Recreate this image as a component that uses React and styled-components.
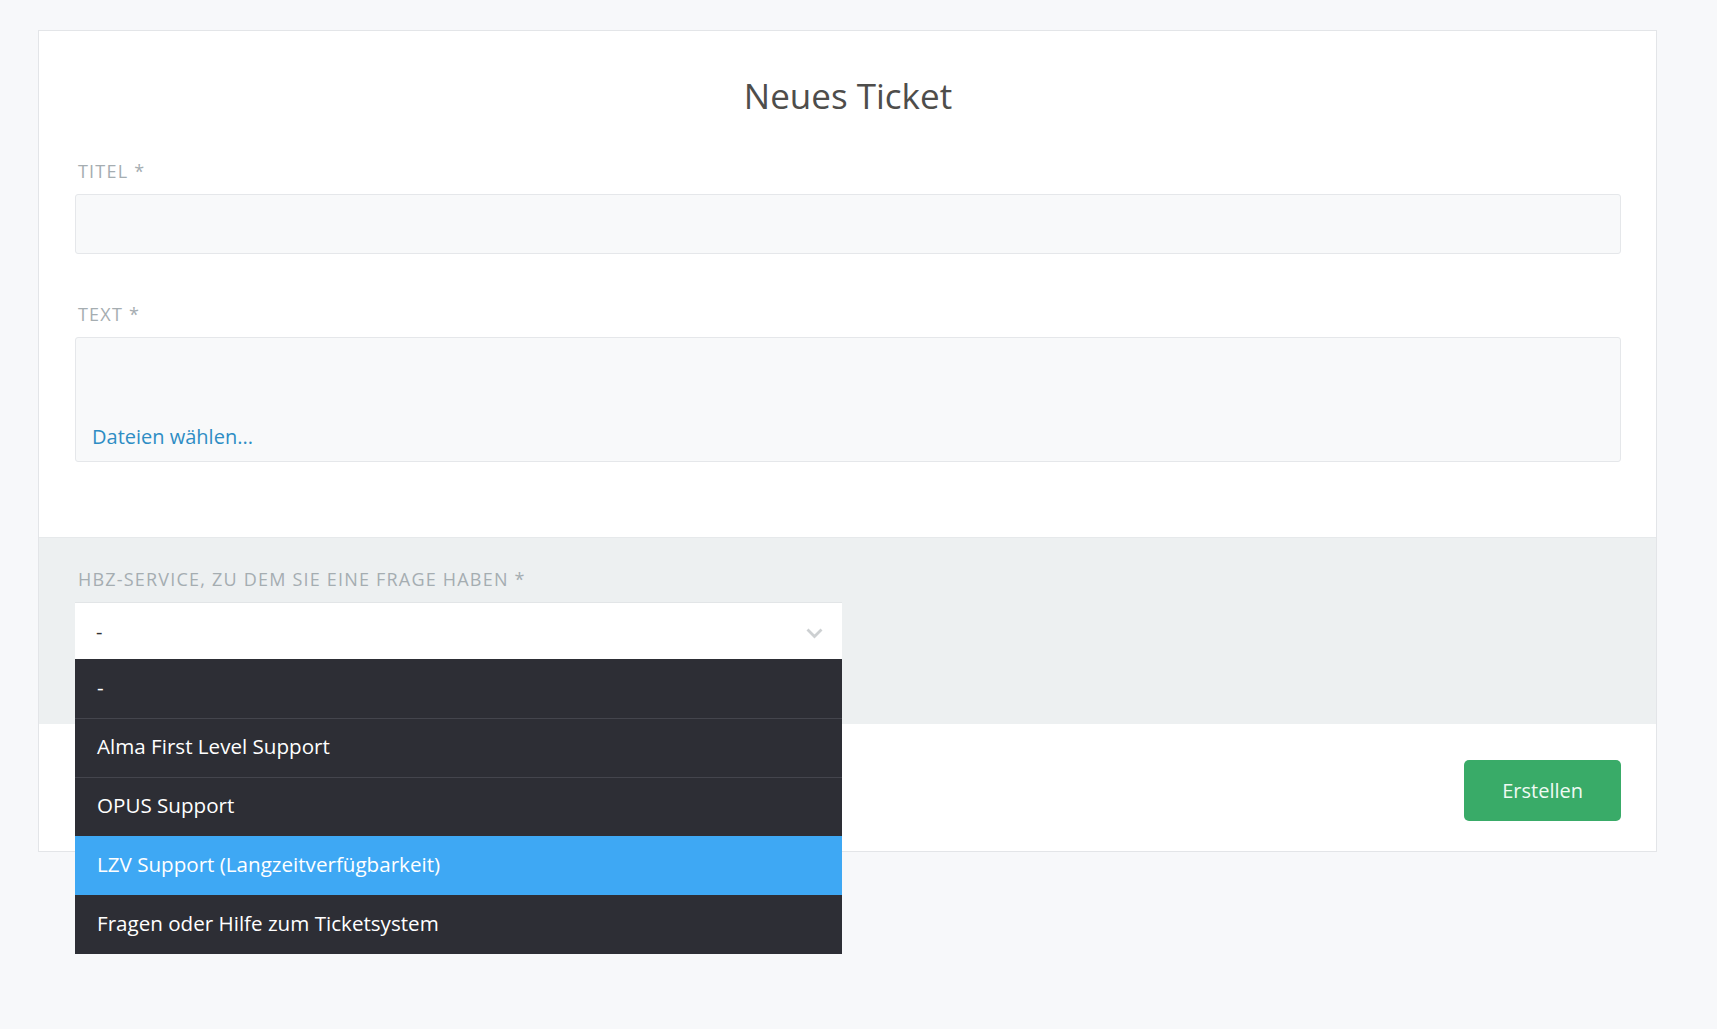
import React from 'react';
import styled, { createGlobalStyle } from 'styled-components';

const GlobalStyle = createGlobalStyle`
  html, body {
    margin: 0;
    padding: 0;
    background: #f7f8fa;
  }
  body {
    font-family: "Open Sans", "Noto Sans", sans-serif;
    color: #4f4f4f;
  }
  * {
    box-sizing: border-box;
  }
`

const Page = styled.div`
  min-height: 1029px;
  padding: 30px 60px 0 38px;
`

const Card = styled.div`
  background: #ffffff;
  border: 1px solid #e3e5e8;
`

const Main = styled.div`
  padding: 44px 35px 75px 36px;
`

const Title = styled.h1`
  margin: 0 0 42px;
  font-size: 35px;
  line-height: 42px;
  font-weight: 400;
  text-align: center;
  color: #4e4d4b;
`

const Label = styled.div`
  font-size: 18px;
  line-height: 24px;
  letter-spacing: 1.2px;
  text-transform: uppercase;
  color: #a5adb1;
  padding-left: 3px;
  margin-bottom: 11px;
`

const Field = styled.div`
  background: #f8f9fa;
  border: 1px solid #e5e7ea;
  border-radius: 3px;
  height: ${p => p.$height}px;
  margin-bottom: ${p => p.$gap || 0}px;
`

const TextArea = styled(Field)`
  display: flex;
  flex-direction: column;
  justify-content: flex-end;
  padding: 0 16px 10px 16px;
`

const FileLink = styled.a`
  font-size: 20px;
  line-height: 28px;
  color: #2e8dc4;
  text-decoration: none;
  cursor: pointer;
`

const Attributes = styled.div`
  background: #edf0f1;
  border-top: 1px solid #e6e9eb;
  padding: 29px 36px 65px;
`

const SelectWrap = styled.div`
  position: relative;
  width: 767px;
`

const Select = styled.div`
  display: flex;
  align-items: center;
  justify-content: space-between;
  height: 57px;
  padding: 0 19px 0 21px;
  background: #ffffff;
  border-top: 1px solid #e2e5e7;
  font-size: 20px;
  color: #333;

  svg {
    margin-top: 4px;
  }
`

const Menu = styled.ul`
  position: absolute;
  top: 100%;
  left: 0;
  right: 0;
  margin: 0;
  padding: 0;
  list-style: none;
  background: #2d2e35;
  z-index: 10;
`

const Option = styled.li`
  height: 59px;
  line-height: 55px;
  padding-left: 22px;
  font-size: 20.6px;
  color: #ffffff;
  background: ${p => (p.$active ? '#3ea8f4' : '#2d2e35')};
  border-top: 1px solid ${p => (p.$sep ? '#44454d' : 'transparent')};
`

const Footer = styled.div`
  display: flex;
  justify-content: flex-end;
  padding: 36px 35px 30px;
`

const Button = styled.button`
  height: 61px;
  padding: 0 38px;
  border: none;
  border-radius: 5px;
  background: #39ab68;
  color: #effaf3;
  font-family: inherit;
  font-size: 20px;
  cursor: pointer;
`

const options = [
  '-',
  'Alma First Level Support',
  'OPUS Support',
  'LZV Support (Langzeitverfügbarkeit)',
  'Fragen oder Hilfe zum Ticketsystem',
]

function Chevron() {
  return (
    <svg width="17" height="11" viewBox="0 0 17 11">
      <path d="M1.5 1.5 L8.5 8.5 L15.5 1.5" fill="none" stroke="#cdd0d2" strokeWidth="2.8" />
    </svg>
  )
}

export default function App() {
  const active = 3
  return (
    <Page>
      <GlobalStyle />
      <Card>
        <Main>
          <Title>Neues Ticket</Title>
          <Label>Titel *</Label>
          <Field $height={60} $gap={48} />
          <Label>Text *</Label>
          <TextArea $height={125}>
            <FileLink>Dateien wählen...</FileLink>
          </TextArea>
        </Main>
        <Attributes>
          <Label>hbz-Service, zu dem Sie eine Frage haben *</Label>
          <SelectWrap>
            <Select>
              <span>-</span>
              <Chevron />
            </Select>
            <Menu>
              {options.map((o, i) => (
                <Option
                  key={o}
                  $active={i === active}
                  $sep={i > 0 && i !== active && i !== active + 1}
                >
                  {o}
                </Option>
              ))}
            </Menu>
          </SelectWrap>
        </Attributes>
        <Footer>
          <Button>Erstellen</Button>
        </Footer>
      </Card>
    </Page>
  )
}
